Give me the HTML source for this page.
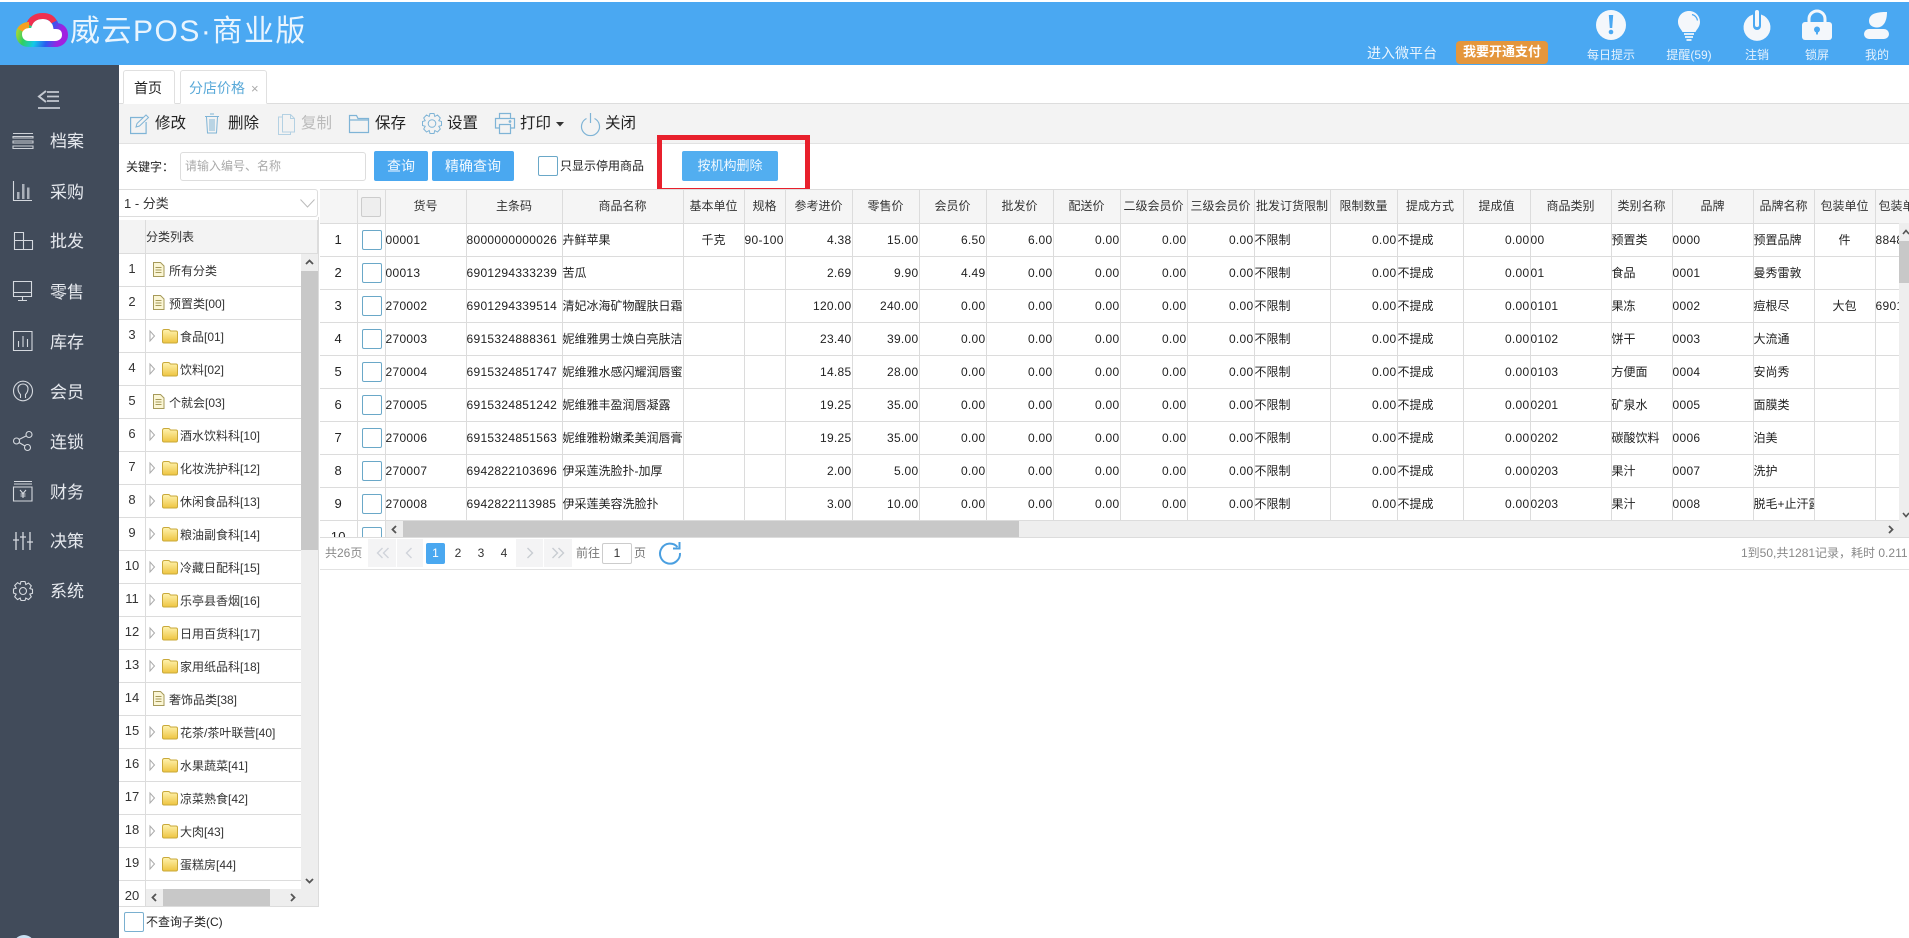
<!DOCTYPE html>
<html lang="zh"><head><meta charset="utf-8"><title>威云POS·商业版</title>
<style>
*{box-sizing:border-box}
html,body{margin:0;padding:0;width:1909px;height:938px;overflow:hidden;background:#fff}
body{font:12px/1.2 "Liberation Sans","Noto Sans CJK SC",sans-serif;color:#333;position:relative}
.a{position:absolute;white-space:nowrap}
svg{position:absolute;overflow:visible}
#hd{left:0;top:2px;width:1909px;height:63px;background:#4aa8f2}
#sb{left:0;top:65px;width:119px;height:873px;background:#414b5a}
.m{left:50px;width:60px;height:24px;line-height:24px;font-size:17px;color:#e6e9ee}
.ic{fill:none;stroke:#d5d9df;stroke-width:1.1}
.lb{top:47px;height:16px;line-height:16px;text-align:center;color:#e6f2fd;font-size:12px}
.tb{top:113px;height:22px;line-height:22px;font-size:15.5px;color:#222}
.ti{fill:none;stroke:#7fb4d6;stroke-width:1.2}
.btn{background:#4aa8f0;color:#f2f9ff;text-align:center;border-radius:2px;font-size:14px;height:30px;line-height:30px;top:151px}
.cb{display:inline-block;width:20px;height:20px;border:1px solid #6aa8c8;border-radius:2px;background:#fff;vertical-align:middle}
#tree{left:119px;top:254px;width:182px;height:652px;overflow:hidden}
.r{position:relative;height:33px;border-bottom:1px solid #dcdcdc;line-height:32px;font-size:12px;color:#333}
.r b{position:absolute;left:0;top:-1px;width:27px;height:34px;border-right:1px solid #dcdcdc;font-weight:400;text-align:center;font-size:13px}
.r i{position:absolute;left:61px;top:1px;font-style:normal}
.r i.d{left:50px}
.r svg{left:0;top:0}
#tw{left:320px;top:189px;width:1589px;height:348px;overflow:hidden}
table{border-collapse:collapse;table-layout:fixed;width:1625px}
th,td{border-right:1px solid #dcdcdc;border-bottom:1px solid #dcdcdc;padding:0;font-weight:400;white-space:nowrap;overflow:hidden;font-size:12px;color:#333}
th{height:34px;background:#f5f5f5;text-align:center;border-top:1px solid #dcdcdc;padding:0}
td{height:33px;letter-spacing:.3px;color:#222}
td:nth-child(5),td:nth-child(6),td:nth-child(15),td:nth-child(17),td:nth-child(20),td:nth-child(22),td:nth-child(23){letter-spacing:0}
td:first-child{text-align:center;font-size:13px}
td:nth-child(2){padding:0 0 0 4px}
.R{text-align:right}
.C{text-align:center}
.pg{top:539px;height:28px;background:#f4f4f5;color:#c0c4cc;text-align:center;line-height:26px;font-size:15px}
.pn{top:543px;height:21px;line-height:21px;width:20px;text-align:center;font-size:12px;color:#333}
</style></head><body>
<svg width="0" height="0" style="position:absolute"><defs>
<linearGradient id="rb" x1="0" y1="0" x2="1" y2=".2"><stop offset="0" stop-color="#c8d82a"/><stop offset=".25" stop-color="#2fd060"/><stop offset=".5" stop-color="#14c8e8"/><stop offset=".75" stop-color="#2a5cf0"/><stop offset="1" stop-color="#a020e0"/></linearGradient>
<linearGradient id="fg" x1="0" y1="0" x2="0" y2="1"><stop offset="0" stop-color="#fff3b0"/><stop offset="1" stop-color="#eec440"/></linearGradient>
<symbol id="folder" viewBox="0 0 182 33"><path d="M31 11 L31 21 L35.500 16z" fill="#fff" stroke="#aaa" stroke-width="1"/><path d="M43.500 11.500q0-2 2-2h4q1 0 2 1.500h5.500q1.500 0 1.500 1.500v9q0 1.500-1.500 1.500h-12q-1.500 0-1.500-1.500z" fill="url(#fg)" stroke="#c9a93a" stroke-width="1"/></symbol>
<symbol id="doc" viewBox="0 0 182 33"><path d="M34.500 8.500h7l3.500 3.500v10.500h-10.500z" fill="#fbf6d5" stroke="#a69a5a" stroke-width="1"/><path d="M36.500 13.500h6M36.500 16h6M36.500 18.500h6" stroke="#a69a5a" stroke-width=".9"/></symbol>
</defs></svg>

<div class="a" id="hd"></div>
<svg style="left:17px;top:13px" width="50" height="34" viewBox="0 0 50 34"><path d="M12 31C5 31 2 26 2 21C2 15 7 12 12 12C14 6 19 3 26 3C33 3 38 8 39 13C45 13 48 17 48 22C48 27 44 31 38 31Z" fill="#fff" stroke="url(#rb)" stroke-width="6"/><path d="M12 12C14 6 19 3 26 3C31 3 35 5 37 9" fill="none" stroke="#f03050" stroke-width="6"/><path d="M3 17C5 14 8 12 12 12" fill="none" stroke="#f6a020" stroke-width="6"/></svg>
<div class="a" style="left:70px;top:14px;height:36px;line-height:36px;font-size:30px;letter-spacing:1.5px;color:#eaf5fe">威云POS·商业版</div>
<div class="a" style="left:1367px;top:44px;height:18px;line-height:18px;font-size:14px;color:#eaf5fe">进入微平台</div>
<div class="a" style="left:1456px;top:41px;width:92px;height:23px;line-height:22px;background:#e4963c;border-radius:4px;color:#fff;text-align:center;font-size:13px;font-weight:700">我要开通支付</div>

<svg style="left:1596px;top:10px" width="30" height="30" viewBox="0 0 30 30"><circle cx="15" cy="15" r="15" fill="#f4f7fb"/><path d="M12.800 5h4.400l-1 13h-2.400z" fill="#4aa8f2"/><circle cx="15" cy="22" r="2.300" fill="#4aa8f2"/></svg>
<svg style="left:1677px;top:10px" width="24" height="31" viewBox="0 0 24 31"><path d="M12 1C5.500 1 1 6 1 12c0 4.500 3 7 4.500 10h13C20 19 23 16.500 23 12 23 6 18.500 1 12 1z" fill="#f4f7fb"/><path d="M15 4.500c3 .8 5 3 5.500 6" fill="none" stroke="#4aa8f2" stroke-width="1.200"/><path d="M7 24h10M8 27h8M9.500 30h5" stroke="#f4f7fb" stroke-width="1.800"/></svg>
<svg style="left:1743px;top:10px" width="28" height="31" viewBox="0 0 28 31"><path d="M10 4.500A13.500 13.500 0 1 0 18 4.500V16a4 4 0 0 1-8 0z" fill="#f4f7fb"/><rect x="12" y="0" width="4" height="17" rx="2" fill="#f4f7fb"/></svg>
<svg style="left:1802px;top:10px" width="30" height="30" viewBox="0 0 30 30"><path d="M7 13V9a8 8 0 0 1 16 0v4" fill="none" stroke="#f4f7fb" stroke-width="3"/><rect x="0" y="12" width="30" height="18" rx="3" fill="#f4f7fb"/><circle cx="15" cy="19.500" r="3" fill="#4aa8f2"/><path d="M13.700 20.500h2.600l-.5 4h-1.600z" fill="#4aa8f2"/></svg>
<svg style="left:1864px;top:12px" width="25" height="27" viewBox="0 0 25 27"><path d="M23 0C14 0 5 1 5 9c0 4 3.500 6.500 8 6.500C19 15.500 23 10 23 0z" fill="#f4f7fb"/><rect x="0" y="17" width="25" height="10" rx="5" fill="#f4f7fb"/></svg>
<div class="a lb" style="left:1581px;width:60px">每日提示</div>
<div class="a lb" style="left:1659px;width:60px">提醒(59)</div>
<div class="a lb" style="left:1727px;width:60px">注销</div>
<div class="a lb" style="left:1787px;width:60px">锁屏</div>
<div class="a lb" style="left:1847px;width:60px">我的</div>

<div class="a" id="sb"></div>
<svg style="left:37px;top:90px" width="24" height="20" viewBox="0 0 24 20"><path d="M9 1L2 6.500L9 12" fill="none" stroke="#c4c9d1" stroke-width="2"/><path d="M10 2h12M10 6.500h12M10 11h12M1 18h22" stroke="#c4c9d1" stroke-width="1.800"/></svg>
<svg class="ic" style="left:13px;top:133px" width="20" height="16" viewBox="0 0 20 16"><path d="M0 .5h20M0 3.500h20v1.500h-20zM0 8h20v2h-20zM0 13h20v2.500h-20z" stroke="#cdd1d7"/></svg>
<svg class="ic" style="left:13px;top:181px" width="20" height="20" viewBox="0 0 20 20"><path d="M.5 0v19.500H19"/><rect x="4" y="11" width="2.500" height="7" fill="#aab0b9" stroke="none"/><rect x="9" y="3" width="2.500" height="15" fill="#aab0b9" stroke="none"/><rect x="14" y="6.500" width="2.500" height="11.500" fill="#aab0b9" stroke="none"/></svg>
<svg class="ic" style="left:13px;top:232px" width="20" height="18" viewBox="0 0 20 18"><path d="M1.500.5h9v8h9v9H1.500zM1.500 8.500h9M10.500 8.500v9"/></svg>
<svg class="ic" style="left:13px;top:281px" width="20" height="20" viewBox="0 0 20 20"><path d="M.5.500h18v15H.500zM.5 11.500h18M9.500 15.500v4M5 19.500h9"/></svg>
<svg class="ic" style="left:13px;top:331px" width="20" height="20" viewBox="0 0 20 20"><path d="M.5.500h18.500v19H.500zM5.500 10v6M10 5v11M14.500 8v8"/></svg>
<svg class="ic" style="left:13px;top:381px" width="20" height="20" viewBox="0 0 20 20"><ellipse cx="10" cy="10" rx="9.500" ry="9.800"/><path d="M7.500 17v-3.500c-1.500-1.500-2.500-3-2.500-6C5 5 7 3 10 3s5 2 5 4.500c0 3-1 4.500-2.500 6V17"/></svg>
<svg class="ic" style="left:13px;top:431px" width="20" height="20" viewBox="0 0 20 20"><circle cx="16" cy="3.500" r="3"/><circle cx="3.500" cy="10" r="3"/><circle cx="14.500" cy="16.500" r="3"/><path d="M6 8.500l7.500-3.700M6 11.500l6 3.500"/></svg>
<svg class="ic" style="left:13px;top:481px" width="20" height="20" viewBox="0 0 20 20"><path d="M1 .5h18M1 3h18M.5 6h18.500v14H.500z"/><path d="M7 9l3 3.500 3-3.500M10 12.500v4.500M7.500 13h5M7.500 15h5"/></svg>
<svg class="ic" style="left:13px;top:532px" width="20" height="18" viewBox="0 0 20 18"><path d="M3 0v18M10 0v18M17 0v18M0 8h6M7 5h6M14 10h6" stroke-width="1.300"/></svg>
<svg class="ic" style="left:13px;top:581px" width="20" height="20" viewBox="0 0 20 20"><circle cx="10" cy="10" r="3.500"/><path d="M8 .5h4l.8 3 2.700-1.500 2.800 2.800-1.500 2.700 2.700.8v4l-2.700.8 1.500 2.700-2.800 2.800-2.700-1.500-.8 2.400H8l-.8-2.400-2.700 1.500-2.800-2.800 1.500-2.700L.5 12V8l2.700-.8-1.500-2.700 2.800-2.800 2.700 1.500z"/></svg>
<div class="a m" style="top:130px">档案</div>
<div class="a m" style="top:181px">采购</div>
<div class="a m" style="top:230px">批发</div>
<div class="a m" style="top:281px">零售</div>
<div class="a m" style="top:331px">库存</div>
<div class="a m" style="top:381px">会员</div>
<div class="a m" style="top:431px">连锁</div>
<div class="a m" style="top:481px">财务</div>
<div class="a m" style="top:530px">决策</div>
<div class="a m" style="top:580px">系统</div>
<div class="a" style="left:13px;top:935px;width:22px;height:22px;border-radius:50%;background:#c9e0f2"></div>

<!-- tabs -->
<div class="a" style="left:119px;top:103px;width:1790px;height:1px;background:#ddd"></div>
<div class="a" style="left:123px;top:70px;width:52px;height:34px;border:1px solid #e0e0e0;border-bottom:1px solid #fff;border-radius:3px 3px 0 0;background:#fff;text-align:center;line-height:34px;font-size:14px;color:#222;padding-right:2px">首页</div>
<div class="a" style="left:180px;top:70px;width:87px;height:34px;border:1px solid #e0e0e0;border-bottom:1px solid #fff;border-radius:3px 3px 0 0;background:#fff;line-height:34px;font-size:14px;color:#59a9d8;padding-left:8px">分店价格<span style="color:#aaa;font-size:13px;margin-left:6px">×</span></div>

<!-- toolbar -->
<div class="a" style="left:119px;top:104px;width:1790px;height:40px;background:#f3f3f3;border-bottom:1px solid #e2e2e2"></div>
<svg class="ti" style="left:130px;top:114px" width="20" height="20" viewBox="0 0 20 20"><path d="M13 3.500H.6v16h15.500V8"/><path d="M6 13l1-3.500L16 1l2.500 2.500L9.500 12z" stroke-width="1"/></svg>
<svg class="ti" style="left:205px;top:113px" width="14" height="21" viewBox="0 0 14 21"><path d="M5 1h4M0 3.500h14M1.500 4l1 16h9l1-16M5 6v12M7 6v12M9 6v12" stroke-width="1"/></svg>
<svg class="ti" style="left:278px;top:114px;opacity:.55" width="17" height="21" viewBox="0 0 17 21"><path d="M4 3h-3.500v17.500h12V18M4.500 .5h8l4 4v13.500h-12zM12.500 .5v4h4" stroke-width="1"/></svg>
<svg class="ti" style="left:349px;top:115px" width="20" height="18" viewBox="0 0 20 18"><path d="M.5 17.500V.5h7l1.500 3h10.500v14zM.5 5h19"/></svg>
<svg class="ti" style="left:422px;top:113px" width="20" height="21" viewBox="0 0 20 21"><circle cx="10" cy="10.500" r="3.800" stroke-width="1"/><path d="M8 .5h4l.8 3 2.700-1.500 2.800 3-1.500 2.700 2.700.8v4l-2.700.8 1.500 2.700-2.800 3-2.700-1.500-.8 3H8l-.8-3-2.700 1.500-2.800-3 1.500-2.700L.5 12.500v-4l2.700-.8-1.500-2.700 2.800-3 2.700 1.500z" stroke-width="1"/></svg>
<svg class="ti" style="left:495px;top:113px" width="20" height="21" viewBox="0 0 20 21"><path d="M4.500 5.500V.5h11v5M4.500 15H.5V5.500h19V15h-4M4.500 11.500h11v9h-11z"/><circle cx="15" cy="8.500" r=".8"/></svg>
<svg class="ti" style="left:581px;top:113px" width="19" height="22" viewBox="0 0 19 22"><path d="M5.500 5.500a9 9 0 1 0 8 0M9.500 0v10"/></svg>
<div class="a tb" style="left:155px">修改</div>
<div class="a tb" style="left:228px">删除</div>
<div class="a tb" style="left:301px;color:#bbb">复制</div>
<div class="a tb" style="left:375px">保存</div>
<div class="a tb" style="left:447px">设置</div>
<div class="a tb" style="left:520px">打印</div>
<svg style="left:556px;top:122px" width="8" height="5" viewBox="0 0 8 5"><path d="M0 0h8L4 4.500z" fill="#333"/></svg>
<div class="a tb" style="left:605px">关闭</div>

<!-- search -->
<div class="a" style="left:126px;top:159px;line-height:16px;color:#222">关键字：</div>
<div class="a" style="left:180px;top:152px;width:186px;height:29px;border:1px solid #ddd;border-radius:3px;line-height:27px;padding-left:4px;color:#aaa">请输入编号、名称</div>
<div class="a btn" style="left:374px;width:54px">查询</div>
<div class="a btn" style="left:432px;width:82px">精确查询</div>
<div class="a cb" style="left:538px;top:156px"></div>
<div class="a" style="left:560px;top:158px;line-height:16px;color:#222">只显示停用商品</div>
<div class="a" style="left:657px;top:135px;width:153px;height:58px;border:5px solid #e8202c"></div>
<div class="a btn" style="left:682px;width:96px;background:#52aef0;font-size:13px">按机构删除</div>

<!-- left panel -->
<div class="a" style="left:119px;top:189px;width:199px;height:28px;border:1px solid #ddd;border-left:0;border-radius:0 3px 3px 0;line-height:27px;padding-left:5px;font-size:13px;color:#333">1 - 分类</div>
<svg style="left:300px;top:199px" width="15" height="9" viewBox="0 0 15 9"><path d="M.5.500l7 7.500 7-7.500" fill="none" stroke="#bbb"/></svg>
<div class="a" style="left:119px;top:220px;width:199px;height:34px;background:#f3f3f3;border-bottom:1px solid #dcdcdc;border-right:1px solid #dcdcdc"></div>
<div class="a" style="left:145px;top:220px;width:1px;height:34px;background:#dcdcdc"></div>
<div class="a" style="left:146px;top:229px;line-height:16px">分类列表</div>
<div class="a" id="tree">
<div class="r"><b>1</b><svg width="182" height="33"><use href="#doc"/></svg><i class="d">所有分类</i></div>
<div class="r"><b>2</b><svg width="182" height="33"><use href="#doc"/></svg><i class="d">预置类[00]</i></div>
<div class="r"><b>3</b><svg width="182" height="33"><use href="#folder"/></svg><i>食品[01]</i></div>
<div class="r"><b>4</b><svg width="182" height="33"><use href="#folder"/></svg><i>饮料[02]</i></div>
<div class="r"><b>5</b><svg width="182" height="33"><use href="#doc"/></svg><i class="d">个就会[03]</i></div>
<div class="r"><b>6</b><svg width="182" height="33"><use href="#folder"/></svg><i>酒水饮料科[10]</i></div>
<div class="r"><b>7</b><svg width="182" height="33"><use href="#folder"/></svg><i>化妆洗护科[12]</i></div>
<div class="r"><b>8</b><svg width="182" height="33"><use href="#folder"/></svg><i>休闲食品科[13]</i></div>
<div class="r"><b>9</b><svg width="182" height="33"><use href="#folder"/></svg><i>粮油副食科[14]</i></div>
<div class="r"><b>10</b><svg width="182" height="33"><use href="#folder"/></svg><i>冷藏日配科[15]</i></div>
<div class="r"><b>11</b><svg width="182" height="33"><use href="#folder"/></svg><i>乐亭县香烟[16]</i></div>
<div class="r"><b>12</b><svg width="182" height="33"><use href="#folder"/></svg><i>日用百货科[17]</i></div>
<div class="r"><b>13</b><svg width="182" height="33"><use href="#folder"/></svg><i>家用纸品科[18]</i></div>
<div class="r"><b>14</b><svg width="182" height="33"><use href="#doc"/></svg><i class="d">奢饰品类[38]</i></div>
<div class="r"><b>15</b><svg width="182" height="33"><use href="#folder"/></svg><i>花茶/茶叶联营[40]</i></div>
<div class="r"><b>16</b><svg width="182" height="33"><use href="#folder"/></svg><i>水果蔬菜[41]</i></div>
<div class="r"><b>17</b><svg width="182" height="33"><use href="#folder"/></svg><i>凉菜熟食[42]</i></div>
<div class="r"><b>18</b><svg width="182" height="33"><use href="#folder"/></svg><i>大肉[43]</i></div>
<div class="r"><b>19</b><svg width="182" height="33"><use href="#folder"/></svg><i>蛋糕房[44]</i></div>
<div class="r"><b>20</b></div>
</div>
<div class="a" style="left:301px;top:254px;width:17px;height:652px;background:#eee"></div>
<div class="a" style="left:301px;top:271px;width:17px;height:279px;background:#c8c8c8"></div>
<svg style="left:305px;top:259px" width="9" height="6" viewBox="0 0 9 6"><path d="M1 5l3.500-3.500L8 5" fill="none" stroke="#555" stroke-width="1.800"/></svg>
<svg style="left:305px;top:878px" width="9" height="6" viewBox="0 0 9 6"><path d="M1 1l3.500 3.500L8 1" fill="none" stroke="#555" stroke-width="1.800"/></svg>
<div class="a" style="left:146px;top:889px;width:172px;height:17px;background:#eee"></div>
<div class="a" style="left:163px;top:889px;width:107px;height:17px;background:#c8c8c8"></div>
<svg style="left:151px;top:893px" width="6" height="9" viewBox="0 0 6 9"><path d="M5 1L1.500 4.500 5 8" fill="none" stroke="#555" stroke-width="1.800"/></svg>
<svg style="left:290px;top:893px" width="6" height="9" viewBox="0 0 6 9"><path d="M1 1l3.500 3.500L1 8" fill="none" stroke="#555" stroke-width="1.800"/></svg>
<div class="a" style="left:119px;top:906px;width:200px;height:1px;background:#dcdcdc"></div>
<div class="a" style="left:318px;top:217px;width:1px;height:690px;background:#dcdcdc"></div>
<div class="a cb" style="left:124px;top:912px;border-color:#7ab0d0"></div>
<div class="a" style="left:146px;top:914px;line-height:16px;font-size:12px;color:#222">不查询子类(C)</div>

<!-- table -->
<div class="a" id="tw">
<table>
<colgroup><col style="width:37px"><col style="width:28px"><col style="width:81px"><col style="width:96px"><col style="width:121px"><col style="width:61px"><col style="width:41px"><col style="width:67px"><col style="width:67px"><col style="width:67px"><col style="width:67px"><col style="width:67px"><col style="width:67px"><col style="width:67px"><col style="width:76px"><col style="width:67px"><col style="width:66px"><col style="width:67px"><col style="width:81px"><col style="width:61px"><col style="width:81px"><col style="width:61px"><col style="width:61px"><col style="width:70px"></colgroup>
<tr><th></th><th><span class="cb" style="background:#eee;border-color:#ccc"></span></th><th>货号</th><th>主条码</th><th>商品名称</th><th>基本单位</th><th>规格</th><th>参考进价</th><th>零售价</th><th>会员价</th><th>批发价</th><th>配送价</th><th>二级会员价</th><th>三级会员价</th><th>批发订货限制</th><th>限制数量</th><th>提成方式</th><th>提成值</th><th>商品类别</th><th>类别名称</th><th>品牌</th><th>品牌名称</th><th>包装单位</th><th style="text-align:left;padding-left:3px">包装单位</th></tr>
<tr><td>1</td><td><span class="cb"></span></td><td>00001</td><td>8000000000026</td><td>卉鲜苹果</td><td class="C">千克</td><td>90-100</td><td class="R">4.38</td><td class="R">15.00</td><td class="R">6.50</td><td class="R">6.00</td><td class="R">0.00</td><td class="R">0.00</td><td class="R">0.00</td><td>不限制</td><td class="R">0.00</td><td>不提成</td><td class="R">0.00</td><td>00</td><td>预置类</td><td>0000</td><td>预置品牌</td><td class="C">件</td><td>8848</td></tr>
<tr><td>2</td><td><span class="cb"></span></td><td>00013</td><td>6901294333239</td><td>苦瓜</td><td></td><td></td><td class="R">2.69</td><td class="R">9.90</td><td class="R">4.49</td><td class="R">0.00</td><td class="R">0.00</td><td class="R">0.00</td><td class="R">0.00</td><td>不限制</td><td class="R">0.00</td><td>不提成</td><td class="R">0.00</td><td>01</td><td>食品</td><td>0001</td><td>曼秀雷敦</td><td></td><td></td></tr>
<tr><td>3</td><td><span class="cb"></span></td><td>270002</td><td>6901294339514</td><td>清妃冰海矿物醒肤日霜</td><td></td><td></td><td class="R">120.00</td><td class="R">240.00</td><td class="R">0.00</td><td class="R">0.00</td><td class="R">0.00</td><td class="R">0.00</td><td class="R">0.00</td><td>不限制</td><td class="R">0.00</td><td>不提成</td><td class="R">0.00</td><td>0101</td><td>果冻</td><td>0002</td><td>痘根尽</td><td class="C">大包</td><td>6901</td></tr>
<tr><td>4</td><td><span class="cb"></span></td><td>270003</td><td>6915324888361</td><td>妮维雅男士焕白亮肤洁</td><td></td><td></td><td class="R">23.40</td><td class="R">39.00</td><td class="R">0.00</td><td class="R">0.00</td><td class="R">0.00</td><td class="R">0.00</td><td class="R">0.00</td><td>不限制</td><td class="R">0.00</td><td>不提成</td><td class="R">0.00</td><td>0102</td><td>饼干</td><td>0003</td><td>大流通</td><td></td><td></td></tr>
<tr><td>5</td><td><span class="cb"></span></td><td>270004</td><td>6915324851747</td><td>妮维雅水感闪耀润唇蜜</td><td></td><td></td><td class="R">14.85</td><td class="R">28.00</td><td class="R">0.00</td><td class="R">0.00</td><td class="R">0.00</td><td class="R">0.00</td><td class="R">0.00</td><td>不限制</td><td class="R">0.00</td><td>不提成</td><td class="R">0.00</td><td>0103</td><td>方便面</td><td>0004</td><td>安尚秀</td><td></td><td></td></tr>
<tr><td>6</td><td><span class="cb"></span></td><td>270005</td><td>6915324851242</td><td>妮维雅丰盈润唇凝露</td><td></td><td></td><td class="R">19.25</td><td class="R">35.00</td><td class="R">0.00</td><td class="R">0.00</td><td class="R">0.00</td><td class="R">0.00</td><td class="R">0.00</td><td>不限制</td><td class="R">0.00</td><td>不提成</td><td class="R">0.00</td><td>0201</td><td>矿泉水</td><td>0005</td><td>面膜类</td><td></td><td></td></tr>
<tr><td>7</td><td><span class="cb"></span></td><td>270006</td><td>6915324851563</td><td>妮维雅粉嫩柔美润唇膏</td><td></td><td></td><td class="R">19.25</td><td class="R">35.00</td><td class="R">0.00</td><td class="R">0.00</td><td class="R">0.00</td><td class="R">0.00</td><td class="R">0.00</td><td>不限制</td><td class="R">0.00</td><td>不提成</td><td class="R">0.00</td><td>0202</td><td>碳酸饮料</td><td>0006</td><td>泊美</td><td></td><td></td></tr>
<tr><td>8</td><td><span class="cb"></span></td><td>270007</td><td>6942822103696</td><td>伊采莲洗脸扑-加厚</td><td></td><td></td><td class="R">2.00</td><td class="R">5.00</td><td class="R">0.00</td><td class="R">0.00</td><td class="R">0.00</td><td class="R">0.00</td><td class="R">0.00</td><td>不限制</td><td class="R">0.00</td><td>不提成</td><td class="R">0.00</td><td>0203</td><td>果汁</td><td>0007</td><td>洗护</td><td></td><td></td></tr>
<tr><td>9</td><td><span class="cb"></span></td><td>270008</td><td>6942822113985</td><td>伊采莲美容洗脸扑</td><td></td><td></td><td class="R">3.00</td><td class="R">10.00</td><td class="R">0.00</td><td class="R">0.00</td><td class="R">0.00</td><td class="R">0.00</td><td class="R">0.00</td><td>不限制</td><td class="R">0.00</td><td>不提成</td><td class="R">0.00</td><td>0203</td><td>果汁</td><td>0008</td><td>脱毛+止汗露</td><td></td><td></td></tr>
<tr><td>10</td><td><span class="cb"></span></td><td></td><td></td><td></td><td></td><td></td><td></td><td></td><td></td><td></td><td></td><td></td><td></td><td></td><td></td><td></td><td></td><td></td><td></td><td></td><td></td><td></td><td></td></tr>
</table>
</div>
<!-- table scrollbars -->
<div class="a" style="left:1899px;top:223px;width:10px;height:298px;background:#eee"></div>
<div class="a" style="left:1899px;top:241px;width:10px;height:42px;background:#c8c8c8"></div>
<svg style="left:1902px;top:229px" width="8" height="6" viewBox="0 0 8 6"><path d="M1 5l3-3.500L7 5" fill="none" stroke="#555" stroke-width="1.600"/></svg>
<svg style="left:1902px;top:512px" width="8" height="6" viewBox="0 0 8 6"><path d="M1 1l3 3.500L7 1" fill="none" stroke="#555" stroke-width="1.600"/></svg>
<div class="a" style="left:386px;top:521px;width:1523px;height:16px;background:#eee"></div>
<div class="a" style="left:403px;top:521px;width:616px;height:16px;background:#c8c8c8"></div>
<svg style="left:391px;top:525px" width="6" height="9" viewBox="0 0 6 9"><path d="M5 1L1.500 4.500 5 8" fill="none" stroke="#555" stroke-width="1.800"/></svg>
<svg style="left:1888px;top:525px" width="6" height="9" viewBox="0 0 6 9"><path d="M1 1l3.500 3.500L1 8" fill="none" stroke="#555" stroke-width="1.800"/></svg>

<!-- pagination -->
<div class="a" style="left:320px;top:537px;width:1589px;height:1px;background:#dcdcdc"></div>
<div class="a" style="left:320px;top:569px;width:1589px;height:1px;background:#e2e2e2"></div>
<div class="a" style="left:325px;top:545px;line-height:16px;color:#888">共26页</div>
<div class="a pg" style="left:368px;width:28px"></div>
<div class="a pg" style="left:397px;width:26px"></div>
<div class="a" style="left:426px;top:543px;width:19px;height:21px;line-height:21px;background:#4aa8f0;color:#fff;text-align:center;border-radius:2px">1</div>
<div class="a pn" style="left:448px">2</div>
<div class="a pn" style="left:471px">3</div>
<div class="a pn" style="left:494px">4</div>
<div class="a pg" style="left:516px;width:27px"></div>
<div class="a pg" style="left:544px;width:28px"></div>
<svg style="left:376px;top:547px" width="14" height="12" viewBox="0 0 14 12"><path d="M6.500 1L1.500 6l5 5M12.500 1l-5 5 5 5" fill="none" stroke="#d0d4da" stroke-width="1.400"/></svg>
<svg style="left:405px;top:547px" width="8" height="12" viewBox="0 0 8 12"><path d="M6.500 1L1.500 6l5 5" fill="none" stroke="#d0d4da" stroke-width="1.400"/></svg>
<svg style="left:526px;top:547px" width="8" height="12" viewBox="0 0 8 12"><path d="M1.500 1l5 5-5 5" fill="none" stroke="#c8ccd2" stroke-width="1.400"/></svg>
<svg style="left:551px;top:547px" width="14" height="12" viewBox="0 0 14 12"><path d="M1.500 1l5 5-5 5M7.500 1l5 5-5 5" fill="none" stroke="#c8ccd2" stroke-width="1.400"/></svg>
<div class="a" style="left:576px;top:545px;line-height:16px;color:#777">前往</div>
<div class="a" style="left:602px;top:543px;width:30px;height:21px;line-height:19px;border:1px solid #ccc;border-radius:2px;text-align:center;color:#333">1</div>
<div class="a" style="left:634px;top:545px;line-height:16px;color:#777">页</div>
<svg style="left:658px;top:541px" width="24" height="24" viewBox="0 0 24 24"><path d="M19.500 6A10 10 0 1 0 22 12" fill="none" stroke="#4a9fe0" stroke-width="2"/><path d="M21.500 1v6.500h-6.500" fill="none" stroke="#4a9fe0" stroke-width="2"/></svg>
<div class="a" style="left:1741px;top:545px;width:168px;overflow:hidden;line-height:16px;color:#888">1到50,共1281记录，耗时 0.211</div>
</body></html>
